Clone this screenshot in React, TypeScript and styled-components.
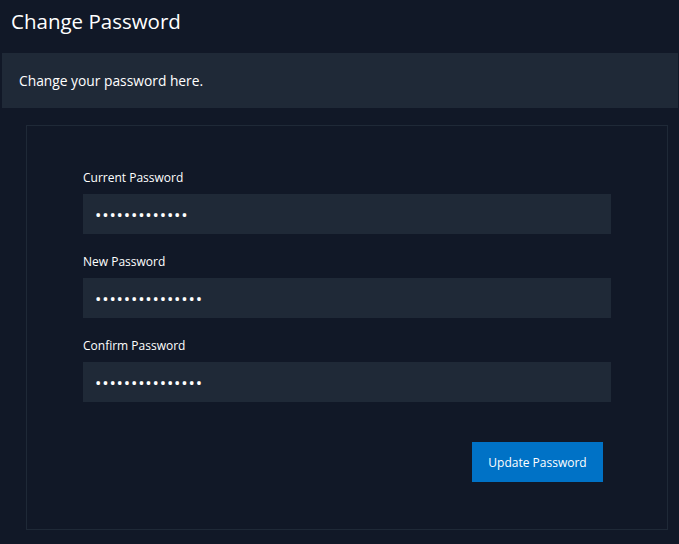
import React from "react";
import styled, { createGlobalStyle } from "styled-components";

const Global = createGlobalStyle`
  html, body { margin: 0; padding: 0; background: #111827; }
  body { font-family: "Open Sans", "Liberation Sans", sans-serif; color: #f9fafb; }
  * { box-sizing: border-box; }
`;

const Page = styled.div`
  display: flex;
  flex-direction: column;
  padding: 0 1px 14px 2px;
  min-height: 544px;
`;

const Header = styled.h1`
  margin: 0;
  height: 53px;
  padding: 8px 9px 0;
  font-size: 20.5px;
  line-height: 27px;
  font-weight: 400;
  color: #ffffff;
`;

const Banner = styled.div`
  display: flex;
  align-items: center;
  height: 55px;
  padding: 0 17px;
  background: #1f2937;
  font-size: 13.8px;
  color: #ffffff;
`;

const Card = styled.div`
  margin: 17px 10px 0 24px;
  border: 1px solid #1f2937;
  padding: 44px 56px 47px;
`;

const Form = styled.form`
  display: flex;
  flex-direction: column;
  gap: 20px;
`;

const Field = styled.div`
  display: flex;
  flex-direction: column;
  gap: 8px;
`;

const Label = styled.label`
  font-size: 12px;
  line-height: 16px;
  font-weight: 500;
  color: #ffffff;
`;

const Input = styled.input`
  height: 40px;
  width: 100%;
  border: none;
  outline: none;
  background: #1f2937;
  color: #ffffff;
  padding: 0 12px;
  font-family: "Open Sans", sans-serif;
  font-size: 17px;
  letter-spacing: 0.8px;
`;

const Actions = styled.div`
  display: flex;
  justify-content: flex-end;
  padding: 20px 8px 0 0;
`;

const Button = styled.button`
  height: 40px;
  width: 131px;
  border: none;
  background: #0072c6;
  color: #ffffff;
  font-family: "Open Sans", sans-serif;
  font-size: 12px;
  cursor: pointer;
`;

const fields = [
  { id: "current", label: "Current Password", value: "a".repeat(13) },
  { id: "new", label: "New Password", value: "a".repeat(15) },
  { id: "confirm", label: "Confirm Password", value: "a".repeat(15) },
];

export default function App() {
  return (
    <>
      <Global />
      <Page>
        <Header>Change Password</Header>
        <Banner>Change your password here.</Banner>
        <Card>
          <Form onSubmit={(e) => e.preventDefault()}>
            {fields.map((f) => (
              <Field key={f.id}>
                <Label htmlFor={f.id}>{f.label}</Label>
                <Input id={f.id} type="password" defaultValue={f.value} readOnly />
              </Field>
            ))}
            <Actions>
              <Button type="submit">Update Password</Button>
            </Actions>
          </Form>
        </Card>
      </Page>
    </>
  );
}
